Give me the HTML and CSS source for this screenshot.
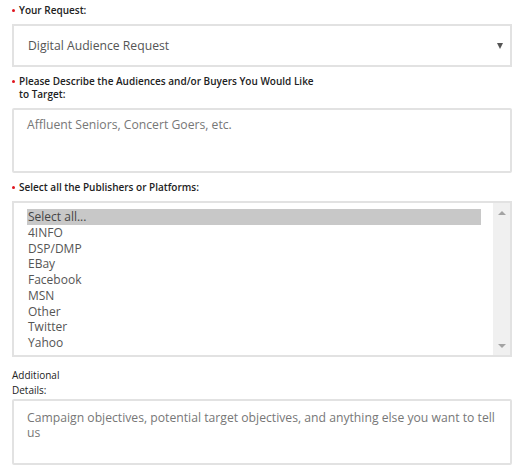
FILE: index.html
```html
<!DOCTYPE html>
<html lang="en">
<head>
    <meta charset="UTF-8">
    <title>Audience Request</title>
    <link rel="stylesheet" href="styles.css">
</head>
<body>
    <form class="request-form">
        <div class="field">
            <label class="label required">Your Request:</label>
            <div class="select-box">
                <span>Digital Audience Request</span>
                <span class="caret"></span>
            </div>
        </div>

        <div class="field">
            <label class="label required">Please Describe the Audiences and/or Buyers You Would Like to Target:</label>
            <div class="text-box">Affluent Seniors, Concert Goers, etc.</div>
        </div>

        <div class="field list-field">
            <label class="label required">Select all the Publishers or Platforms:</label>
            <div class="list-box">
                <ul class="options">
                    <li class="selected">Select all...</li>
                    <li>4INFO</li>
                    <li>DSP/DMP</li>
                    <li>EBay</li>
                    <li>Facebook</li>
                    <li>MSN</li>
                    <li>Other</li>
                    <li>Twitter</li>
                    <li>Yahoo</li>
                </ul>
                <div class="scrollbar">
                    <span class="arrow up"></span>
                    <span class="arrow down"></span>
                </div>
            </div>
        </div>

        <div class="field">
            <label class="label narrow">Additional Details:</label>
            <div class="text-box tall">Campaign objectives, potential target objectives, and anything else you want to tell us</div>
        </div>
    </form>
</body>
</html>
```

FILE: styles.css
```css
* {
    box-sizing: border-box;
    margin: 0;
    padding: 0;
}

body {
    background: #fff;
    font-family: 'Open Sans', 'Liberation Sans', sans-serif;
    color: #333;
}

.request-form {
    width: 512px;
    padding: 4px 0 0 12px;
}

.field {
    margin-bottom: 8px;
}

.list-field {
    margin-bottom: 11px;
}

.label {
    display: block;
    position: relative;
    max-width: 312px;
    font-size: 10px;
    font-weight: 600;
    line-height: 13px;
    color: #222;
    margin-bottom: 7px;
}

.label.required {
    padding-left: 7px;
}

.label.required::before {
    content: '';
    position: absolute;
    left: 0;
    top: 5px;
    width: 3px;
    height: 3px;
    border-radius: 50%;
    background: #e0151f;
}

.label.narrow {
    max-width: 60px;
    font-weight: 400;
    line-height: 15px;
    margin-bottom: 1px;
}

.select-box {
    display: flex;
    justify-content: space-between;
    align-items: center;
    height: 43px;
    border: 2px solid #e2e2e2;
    padding: 0 7px 0 14px;
    font-size: 12.2px;
    color: #555;
}

.caret {
    width: 0;
    height: 0;
    border-left: 3px solid transparent;
    border-right: 3px solid transparent;
    border-top: 6px solid #555;
}

.text-box {
    height: 65px;
    border: 2px solid #e2e2e2;
    border-radius: 2px;
    padding: 7px 13px;
    font-size: 12.2px;
    line-height: 15px;
    color: #777;
}

.text-box.tall {
    height: 66px;
    padding-top: 9px;
}

.list-box {
    display: flex;
    height: 156px;
    border: 2px solid #e2e2e2;
}

.options {
    flex: 1;
    list-style: none;
    padding: 6px 12px 0 13px;
    font-size: 12px;
    line-height: 15.75px;
    color: #555;
}

.options li {
    padding-left: 1px;
}

.options .selected {
    background: #c8c8c8;
    color: #444;
}

.scrollbar {
    display: flex;
    flex-direction: column;
    justify-content: space-between;
    align-items: center;
    width: 17px;
    background: #f0f0f0;
    padding: 8px 0 7px;
}

.arrow {
    width: 0;
    height: 0;
    border-left: 4px solid transparent;
    border-right: 4px solid transparent;
}

.arrow.up {
    border-bottom: 4px solid #a3a3a3;
}

.arrow.down {
    border-top: 4px solid #a3a3a3;
}
```
